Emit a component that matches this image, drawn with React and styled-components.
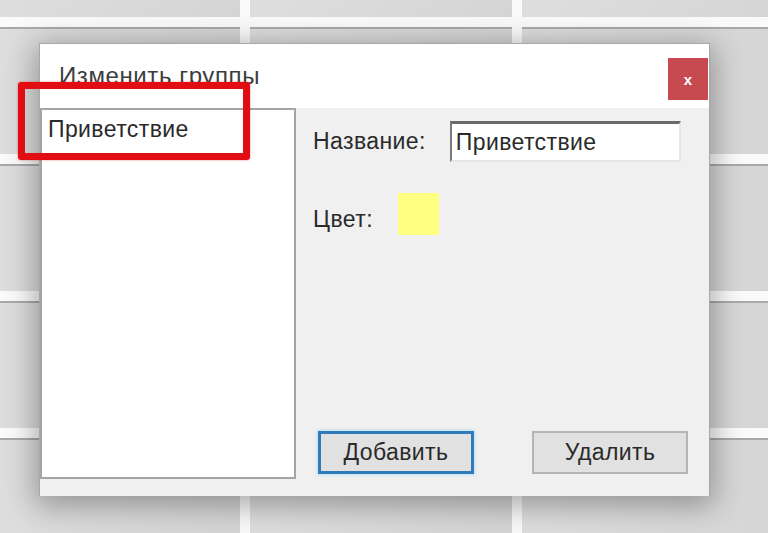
import React from "react";
import styled, { createGlobalStyle } from "styled-components";

const GlobalStyle = createGlobalStyle`
  html, body {
    margin: 0;
    padding: 0;
    width: 768px;
    height: 533px;
    overflow: hidden;
    background: #fafafa;
    font-family: "Liberation Sans", Arial, sans-serif;
  }
`;

const Desktop = styled.div`
  position: relative;
  width: 768px;
  height: 533px;
  overflow: hidden;
  background: #fafafa;
`;

const TileGrid = styled.div`
  display: grid;
  grid-template-columns: repeat(3, 262px);
  grid-auto-rows: 127px;
  gap: 10px;
  margin: -110px 0 0 -22px;
`;

const Tile = styled.div`
  background: linear-gradient(90deg, #dedede, #d5d5d5);
  border-top: 2px solid #a9a9a9;
  box-sizing: border-box;
`;

const Dialog = styled.div`
  position: absolute;
  left: 39px;
  top: 43px;
  width: 671px;
  height: 453px;
  box-sizing: border-box;
  border: 1px solid #a8a8a8;
  border-bottom: none;
  background: #f0f0f0;
  display: flex;
  flex-direction: column;
  box-shadow: 0 6px 28px 4px rgba(0, 0, 0, 0.32);
`;

const TitleBar = styled.div`
  height: 64px;
  background: #ffffff;
  display: flex;
  align-items: flex-start;
  justify-content: space-between;
  padding: 0 1px 0 19px;
`;

const Title = styled.div`
  margin-top: 18px;
  font-size: 24px;
  letter-spacing: 0.6px;
  color: #3c3c3c;
`;

const CloseButton = styled.div`
  margin-top: 14px;
  width: 40px;
  height: 42px;
  background: #c84a51;
  color: #ffffff;
  font-size: 15px;
  font-weight: bold;
  display: flex;
  align-items: center;
  justify-content: center;
`;

const Body = styled.div`
  flex: 1;
  display: flex;
  padding-bottom: 17px;
`;

const ListBox = styled.div`
  width: 256px;
  box-sizing: border-box;
  background: #ffffff;
  border: 2px solid #a4a4a4;
  padding: 6px 6px;
`;

const Text = styled.span`
  font-size: 23px;
  letter-spacing: 0.4px;
  color: #2a2a2a;
`;

const ListItem = styled(Text)`
  display: block;
`;

const Panel = styled.div`
  flex: 1;
  display: flex;
  flex-direction: column;
  padding: 13px 26px 5px 17px;
`;

const Row = styled.div`
  display: flex;
  align-items: ${(p) => p.align};
  gap: ${(p) => p.gap}px;
  margin-bottom: ${(p) => p.spacing}px;
`;

const TextInput = styled.div`
  width: 231px;
  height: 41px;
  box-sizing: border-box;
  background: #ffffff;
  border-top: 3px solid #6a6a6a;
  border-left: 2px solid #7a7a7a;
  border-right: 2px solid #e6e6e6;
  border-bottom: 2px solid #e6e6e6;
  padding: 0 4px;
  display: flex;
  align-items: center;
`;

const Swatch = styled.div`
  width: 41px;
  height: 42px;
  background: #ffff80;
`;

const ColorLabel = styled(Text)`
  padding-bottom: 2px;
`;

const Buttons = styled.div`
  margin-top: auto;
  margin-right: -5px;
  display: flex;
  justify-content: space-between;
  padding-left: 5px;
`;

const Button = styled.div`
  width: 156px;
  height: 43px;
  box-sizing: border-box;
  background: #e1e1e1;
  border: ${(p) => (p.focused ? "3px solid #2f7bb9" : "2px solid #b4b4b4")};
  box-shadow: ${(p) => (p.focused ? "0 0 3px 1px #b9def5" : "none")};
  display: flex;
  align-items: center;
  justify-content: center;
`;

const Highlight = styled.div`
  position: absolute;
  left: 18px;
  top: 82px;
  width: 232px;
  height: 78px;
  box-sizing: border-box;
  border: 7px solid #e10d12;
  border-radius: 3px;
  box-shadow: 0 0 2px rgba(225, 13, 18, 0.6);
`;

export default function App() {
  const tiles = Array.from({ length: 15 });
  return (
    <Desktop>
      <GlobalStyle />
      <TileGrid>
        {tiles.map((_, i) => (
          <Tile key={i} />
        ))}
      </TileGrid>
      <Dialog>
        <TitleBar>
          <Title>Изменить группы</Title>
          <CloseButton>x</CloseButton>
        </TitleBar>
        <Body>
          <ListBox>
            <ListItem>Приветствие</ListItem>
          </ListBox>
          <Panel>
            <Row align="center" gap={24} spacing={31}>
              <Text>Название:</Text>
              <TextInput>
                <Text>Приветствие</Text>
              </TextInput>
            </Row>
            <Row align="flex-end" gap={25} spacing={0}>
              <ColorLabel>Цвет:</ColorLabel>
              <Swatch />
            </Row>
            <Buttons>
              <Button focused>
                <Text>Добавить</Text>
              </Button>
              <Button>
                <Text>Удалить</Text>
              </Button>
            </Buttons>
          </Panel>
        </Body>
      </Dialog>
      <Highlight />
    </Desktop>
  );
}
